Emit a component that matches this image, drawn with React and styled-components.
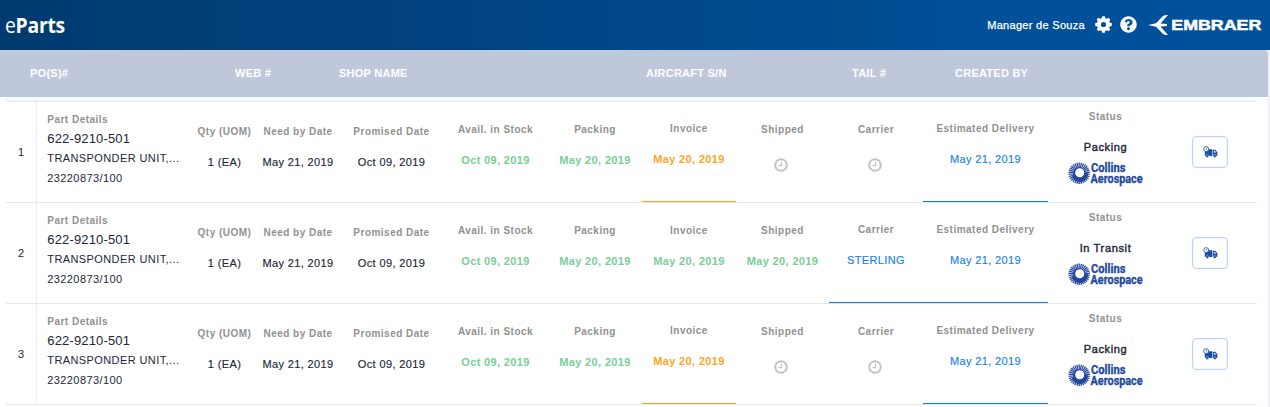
import React from 'react';
import styled, { createGlobalStyle } from 'styled-components';
import { FaQuestionCircle } from 'react-icons/fa';

const GlobalStyle = createGlobalStyle`
  * { box-sizing: border-box; }
  html, body { margin: 0; overflow: hidden; }
  body { background: #fff; font-family: "Liberation Sans", Arial, sans-serif; color: #212738; }
`;
const Page = styled.div`
  width: 1270px; height: 407px; overflow: hidden; background: #edf1f5;
`;
const TopBar = styled.header`
  height: 50px; display: flex; align-items: center; justify-content: space-between;
  padding: 0 8px 0 5px; color: #fff;
  background: linear-gradient(90deg, #003b70 0%, #00417d 30%, #00509a 80%, #00519b 100%);
`;
const Brand = styled.div`
  font: 700 22px/26px "Open Sans", "Noto Sans", sans-serif; letter-spacing: -.3px;
  transform: scaleX(.88); transform-origin: left; margin-top: -3px;
  span { font-weight: 400; }
`;
const UserArea = styled.div` display: flex; align-items: center; `;
const UserName = styled.span` font-size: 11px; letter-spacing: .3px; margin: -1px 10px 0 0; -webkit-text-stroke: .25px #fff; `;
const IconSlot = styled.span` display: flex; font-size: 17px; margin: -1px ${p => p.$gap}px 0 0; `;
const Main = styled.main`
  width: 1268px; height: 357px; background: #fff; border-top-right-radius: 4px;
`;
const HeadRow = styled.div`
  display: grid; grid-template-columns: 205px 104px 307px 206px 103px 1fr;
  height: 47px; padding: 0 0 2px 30px; align-items: center;
  background: #bfc8da; border-top-right-radius: 4px;
  color: #fff; font-size: 11px; font-weight: 700;
`;
const HeadCell = styled.span` letter-spacing: .25px; `;
const Table = styled.section` margin: 0 11px 0 6px; `;
const TableCap = styled.div`
  height: 5px; background: #f6fafc; border-bottom: 1px solid #e3e9ec; border-radius: 0 0 3px 3px;
`;
const Row = styled.article`
  height: 101px; display: grid;
  grid-template-columns: 31px 156px 63px 84px 103px 105px 94px 94px 93px 94px 125px 115px 94px;
  border-bottom: 1px solid #e4e8ea;
`;
const IndexCell = styled.div`
  border-right: 1px dotted #dbe6ea; display: flex; align-items: center; justify-content: center; font-size: 11px;
`;
const Label = styled.div`
  font-size: 10px; line-height: 12px; font-weight: 700; letter-spacing: .48px; color: #919191; white-space: nowrap;
`;
const Details = styled.div` padding: 12px 0 0 10.3px; white-space: nowrap; `;
const PartNumber = styled.div` font-size: 13px; line-height: 16px; letter-spacing: .15px; margin-top: 5px; `;
const PartText = styled.div` font-size: 11px; line-height: 14px; letter-spacing: .4px; margin-top: ${p => p.$gap}px; `;
const Cell = styled.div`
  text-align: center; white-space: nowrap; padding-top: ${p => p.$top}px;
  border-bottom: 1px solid ${p => p.$line || 'transparent'};
`;
const Value = styled.div`
  font-size: 11px; line-height: 14px; margin-top: 17px; letter-spacing: ${p => (p.$bold ? '.36px' : '.38px')};
  font-weight: ${p => (p.$bold ? 700 : 400)}; color: ${p => p.$color || '#212738'};
  -webkit-text-stroke: ${p => (p.$bold ? 0 : '.15px')} currentColor;
`;
const Pending = styled.div` margin: 22px 3px 0 0; height: 14px; display: flex; justify-content: center; `;
const StatusCell = styled.div` text-align: center; padding-top: 9px; `;
const StatusValue = styled.div`
  font-size: 11px; line-height: 14px; letter-spacing: .65px; margin: 17px 0 8px; -webkit-text-stroke: .4px #212738;
`;
const ActionCell = styled.div` display: flex; align-items: center; justify-content: center; `;
const TruckButton = styled.button`
  width: 36px; height: 32px; border: 1px solid #bdd3f8; border-radius: 4px; background: #fff;
  display: flex; align-items: center; justify-content: center; padding: 0;
  box-shadow: inset 0 0 0 1px #f0f5fe;
`;

const GREEN = '#77cf97', ORANGE = '#ffa51f', BLUE = '#1583ea', LINE_BLUE = '#0b7de8';

const Clock = () => (
  <svg width="14" height="14" viewBox="0 0 14 14" fill="none" stroke="#c3c3c3">
    <circle cx="7" cy="7" r="5.8" strokeWidth="2" />
    <path d="M7.5 3.5V7.6H4.5" strokeWidth="1.2" />
  </svg>
);

const teeth = [0, 45, 90, 135, 180, 225, 270, 315];
const Gear = () => (
  <svg width="17" height="17" viewBox="0 0 17 17" fill="#fff">
    <circle cx="8.5" cy="8.5" r="4.6" fill="none" stroke="#fff" strokeWidth="4" />
    {teeth.map(a => (
      <path key={a} d="M6.6 3L7.1 0.2H9.9L10.4 3Z" transform={`rotate(${a} 8.5 8.5)`} />
    ))}
  </svg>
);

const EmbraerLogo = () => (
  <svg width="114" height="22" viewBox="0 0 114 22" fill="#fff">
    <path d="M0 11L8 9.2L15 2Q17 .8 20 1L12.5 9.5L19 10.1V12L12.5 12.5L20 21Q17 21.4 15 20L8 12.8Z" />
    <text x="23.3" y="16" fontFamily="Liberation Sans, Arial, sans-serif" fontWeight="700" fontSize="14" stroke="#fff" strokeWidth=".5" textLength="90" lengthAdjust="spacingAndGlyphs">EMBRAER</text>
  </svg>
);

const rays = Array.from({ length: 30 }, (_, i) => i * 12);
const CollinsSvg = styled.svg` display: block; margin: 0 auto; overflow: visible; `;
const CollinsLogo = () => (
  <CollinsSvg width="76" height="24" viewBox="0 0 76 24" fill="#24479e">
    {rays.map(a => (
      <path key={a} d="M10.5 .6L11.9 .6L11.6 7.5L10.8 7.5Z" transform={`rotate(${a} 11.2 11.3)`} />
    ))}
    <path d="M20 11.3A8.3 8.3 0 0 1 4 14.8L7 10.5L15.6 11Z" />
    <circle cx="11.2" cy="11.3" r="6.2" />
    <circle cx="11.7" cy="10.7" r="4.5" fill="#fff" />
    <g fontFamily="Roboto, Liberation Sans, sans-serif" fontWeight="700" fontSize="12.3" stroke="#24479e" strokeWidth=".3">
      <text x="23" y="10" textLength="34.5" lengthAdjust="spacingAndGlyphs">Collins</text>
      <text x="22.6" y="20.8" textLength="52" lengthAdjust="spacingAndGlyphs">Aerospace</text>
    </g>
  </CollinsSvg>
);

const Truck = () => (
  <svg width="15" height="12" viewBox="0 0 15 12" fill="#1b4ea5">
    <path d="M3 3.2H9.2V10H1.8V6Z" />
    <path d="M9.7 3.8H12.4L14.4 6.6V10H9.7Z" />
    <path d="M10.9 4.9H12L13.1 6.6H10.9Z" fill="#fff" />
    <circle cx="3.2" cy="3.1" r="2.5" fill="#fff" stroke="#1b4ea5" strokeWidth=".8" />
    <path d="M3.2 1.8V3.3L4.3 2.6" fill="none" stroke="#1b4ea5" strokeWidth=".6" />
    <circle cx="4.3" cy="10.1" r="1.5" stroke="#fff" strokeWidth=".4" />
    <circle cx="11.8" cy="10.1" r="1.5" stroke="#fff" strokeWidth=".4" />
  </svg>
);

const headings = ['PO(S)#', 'WEB #', 'SHOP NAME', 'AIRCRAFT S/N', 'TAIL #', 'CREATED BY'];
const orders = [
  { id: 1, status: 'Packing' },
  { id: 2, status: 'In Transit', shipped: true },
  { id: 3, status: 'Packing' },
];

const Step = ({ label, value, color, bold, top, line }) => (
  <Cell $top={top} $line={line}>
    <Label>{label}</Label>
    {value ? <Value $color={color} $bold={bold}>{value}</Value> : <Pending><Clock /></Pending>}
  </Cell>
);

const OrderRow = ({ id, status, shipped }) => (
  <Row>
    <IndexCell>{id}</IndexCell>
    <Details>
      <Label>Part Details</Label>
      <PartNumber>622-9210-501</PartNumber>
      <PartText $gap={4}>TRANSPONDER UNIT,...</PartText>
      <PartText $gap={6}>23220873/100</PartText>
    </Details>
    <Step label="Qty (UOM)" value="1 (EA)" top={24} />
    <Step label="Need by Date" value="May 21, 2019" top={24} />
    <Step label="Promised Date" value="Oct 09, 2019" top={24} />
    <Step label="Avail. in Stock" value="Oct 09, 2019" color={GREEN} bold top={22} />
    <Step label="Packing" value="May 20, 2019" color={GREEN} bold top={22} />
    <Step label="Invoice" value="May 20, 2019" color={shipped ? GREEN : ORANGE} bold top={shipped ? 22 : 21} line={shipped ? undefined : ORANGE} />
    <Step label="Shipped" value={shipped && 'May 20, 2019'} color={GREEN} bold top={22} />
    <Step label="Carrier" value={shipped && 'STERLING'} color={BLUE} top={shipped ? 21 : 22} line={shipped ? LINE_BLUE : undefined} />
    <Step label="Estimated Delivery" value="May 21, 2019" color={BLUE} top={21} line={LINE_BLUE} />
    <StatusCell>
      <Label>Status</Label>
      <StatusValue>{status}</StatusValue>
      <CollinsLogo />
    </StatusCell>
    <ActionCell><TruckButton aria-label="Track shipment"><Truck /></TruckButton></ActionCell>
  </Row>
);

export default function App() {
  return (
    <Page>
      <GlobalStyle />
      <TopBar>
        <Brand><span>e</span>Parts</Brand>
        <UserArea>
          <UserName>Manager de Souza</UserName>
          <IconSlot $gap={8}><Gear /></IconSlot>
          <IconSlot $gap={11}><FaQuestionCircle /></IconSlot>
          <EmbraerLogo />
        </UserArea>
      </TopBar>
      <Main>
        <HeadRow>{headings.map(h => <HeadCell key={h}>{h}</HeadCell>)}</HeadRow>
        <Table>
          <TableCap />
          {orders.map(o => <OrderRow key={o.id} {...o} />)}
        </Table>
      </Main>
    </Page>
  );
}
